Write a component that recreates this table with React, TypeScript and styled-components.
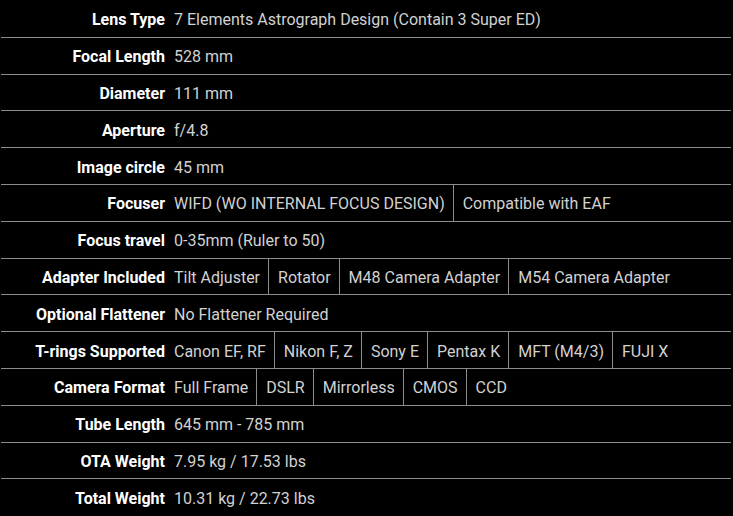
import React from 'react';
import styled, { createGlobalStyle } from 'styled-components';

const GlobalStyle = createGlobalStyle`
  html, body {
    margin: 0;
    padding: 0;
    background: #000;
  }
  body {
    font-family: Roboto, 'Liberation Sans', sans-serif;
    -webkit-font-smoothing: antialiased;
  }
`;

const SpecTable = styled.div`
  display: flex;
  flex-flow: column nowrap;
  width: 730px;
  margin: 0 2px 0 1px;
  padding-top: 1px;
  background: #000;
`;

const Row = styled.div`
  display: flex;
  flex-flow: row nowrap;
  align-items: stretch;
  height: 35.8px;
  border-bottom: 1px solid #8c8c8c;

  &:last-child {
    border-bottom: none;
  }
`;

const Label = styled.div`
  display: flex;
  align-items: center;
  justify-content: flex-end;
  flex: 0 0 164px;
  padding-top: 2px;
  color: #fff;
  font-size: 16px;
  font-weight: 700;
  white-space: nowrap;
`;

const Cell = styled.div<{ $first?: boolean }>`
  display: flex;
  align-items: center;
  padding: 2px 8px 0 9px;
  color: #d2d2d2;
  font-size: 16px;
  font-weight: 400;
  white-space: nowrap;
  border-left: ${(p) => (p.$first ? 'none' : '1px solid #8c8c8c')};
`;

const specs: [string, string[]][] = [
  ['Lens Type', ['7 Elements Astrograph Design (Contain 3 Super ED)']],
  ['Focal Length', ['528 mm']],
  ['Diameter', ['111 mm']],
  ['Aperture', ['f/4.8']],
  ['Image circle', ['45 mm']],
  ['Focuser', ['WIFD (WO INTERNAL FOCUS DESIGN)', 'Compatible with EAF']],
  ['Focus travel', ['0-35mm (Ruler to 50)']],
  ['Adapter Included', ['Tilt Adjuster', 'Rotator', 'M48 Camera Adapter', 'M54 Camera Adapter']],
  ['Optional Flattener', ['No Flattener Required']],
  ['T-rings Supported', ['Canon EF, RF', 'Nikon F, Z', 'Sony E', 'Pentax K', 'MFT (M4/3)', 'FUJI X']],
  ['Camera Format', ['Full Frame', 'DSLR', 'Mirrorless', 'CMOS', 'CCD']],
  ['Tube Length', ['645 mm - 785 mm']],
  ['OTA Weight', ['7.95 kg / 17.53 lbs']],
  ['Total Weight', ['10.31 kg / 22.73 lbs']],
];

export default function App() {
  return (
    <>
      <GlobalStyle />
      <SpecTable>
        {specs.map(([label, values]) => (
          <Row key={label}>
            <Label>{label}</Label>
            {values.map((v, i) => (
              <Cell key={v} $first={i === 0}>
                {v}
              </Cell>
            ))}
          </Row>
        ))}
      </SpecTable>
    </>
  );
}
